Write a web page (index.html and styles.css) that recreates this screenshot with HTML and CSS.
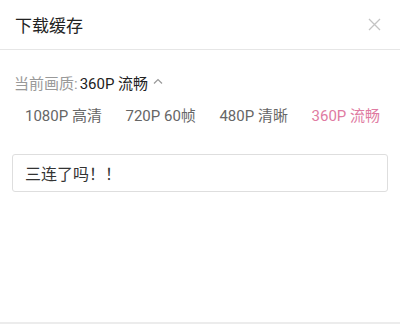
FILE: index.html
```html
<!DOCTYPE html>
<html lang="zh-CN">
<head>
    <meta charset="UTF-8">
    <meta name="viewport" content="width=device-width, initial-scale=1.0">
    <title>下载缓存</title>
    <link rel="stylesheet" href="styles.css">
</head>
<body>
    <div class="download-panel">
        <div class="panel-header">
            <h1>下载缓存</h1>
            <svg class="close-icon" width="13" height="13" viewBox="0 0 13 13">
                <path d="M1 1 L12 12 M12 1 L1 12" stroke="#c4c4c4" stroke-width="1.3" fill="none"/>
            </svg>
        </div>
        <div class="panel-body">
            <div class="current-quality">
                <span class="label">当前画质:</span>
                <span class="value">360P 流畅</span>
                <svg class="arrow-icon" width="10" height="6" viewBox="0 0 10 6">
                    <path d="M1 5.5 L5 1.5 L9 5.5" stroke="#999" stroke-width="1.2" fill="none"/>
                </svg>
            </div>
            <div class="quality-list">
                <span class="quality-item">1080P 高清</span>
                <span class="quality-item">720P 60帧</span>
                <span class="quality-item">480P 清晰</span>
                <span class="quality-item active">360P 流畅</span>
            </div>
            <div class="message-box">三连了吗！！</div>
        </div>
        <div class="panel-footer"></div>
    </div>
</body>
</html>
```

FILE: styles.css
```css
body {
    font-family: 'Roboto', 'Noto Sans CJK SC', sans-serif;
    margin: 0;
    padding: 0;
    background: #ffffff;
}

.download-panel {
    height: 334px;
    display: flex;
    flex-direction: column;
}

.panel-header {
    height: 50px;
    padding: 0 19px 0 15px;
    display: flex;
    justify-content: space-between;
    align-items: center;
    border-bottom: 1px solid #e6e6e6;
    box-sizing: border-box;
}

.panel-header h1 {
    margin: 0;
    font-size: 17px;
    font-weight: normal;
    color: #222;
}

.close-icon {
    display: block;
}

.panel-body {
    flex: 1;
    padding: 20px 12px 0;
}

.current-quality {
    display: flex;
    align-items: center;
    padding-left: 2px;
    height: 24px;
    font-size: 15px;
}

.current-quality .label {
    color: #999;
}

.current-quality .value {
    color: #222;
    margin-left: 2px;
}

.arrow-icon {
    margin-left: 5px;
    margin-top: -2px;
}

.quality-list {
    display: flex;
    justify-content: space-between;
    padding: 0 8px 0 13px;
    margin-top: 8px;
    height: 24px;
    align-items: center;
    font-size: 15px;
    color: #666;
}

.quality-item {
    white-space: nowrap;
}

.quality-item.active {
    color: #e07ba2;
}

.message-box {
    margin-top: 28px;
    height: 38px;
    border: 1px solid #dedede;
    border-radius: 3px;
    box-sizing: border-box;
    padding: 0 12px;
    display: flex;
    align-items: center;
    font-size: 16px;
    color: #333;
}

.panel-footer {
    height: 10px;
    border-top: 2px solid #ececec;
}
```
